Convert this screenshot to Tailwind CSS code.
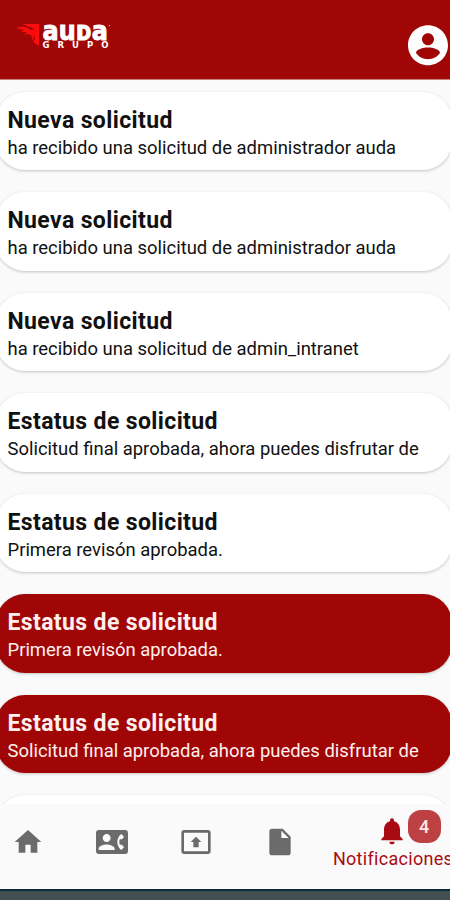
<!DOCTYPE html>
<html lang="es">
<head>
  <meta charset="UTF-8">
  <meta name="viewport" content="width=device-width, initial-scale=1.0">
  <title>Notificaciones</title>
  <script src="https://cdn.jsdelivr.net/npm/@tailwindcss/browser@4"></script>
</head>
<body class="bg-[#fafafa] font-[Roboto,sans-serif] h-[900px] overflow-hidden flex flex-col">
  <!-- Encabezado -->
  <header class="h-20 shrink-0 bg-[#a00606] border-b border-[#c98080] flex items-start justify-between overflow-hidden">
    <svg class="w-24 h-7 ml-4 mt-[22px] overflow-visible" viewBox="0 0 96 28">
      <g fill="#fb0d0d">
        <path d="M6 2H23V24L17 20L19 17L18 12L14 9L18 7L14 5Z"></path>
        <path d="M0 6C7 3 15 6 18 12L17 19L15 13L11 12L8 13L11 10L5 10L8 8Z"></path>
      </g>
      <g fill="white" stroke="white" font-family="DejaVu Sans" font-weight="bold">
        <text x="26.500" y="17.800" font-size="26" stroke-width="0.9" textLength="65.500" lengthAdjust="spacingAndGlyphs">auᴅa</text>
        <text x="26.500" y="26.300" font-size="8.500" stroke-width="0" textLength="66">GRUPO</text>
        <circle cx="93.500" cy="3.500" r="0.500" stroke="none"></circle>
      </g>
    </svg>
    <svg class="w-12 h-12 mt-[22px] -mr-0.5 shrink-0" viewBox="0 0 24 24" fill="white">
      <path d="M12 2C6.480 2 2 6.480 2 12s4.480 10 10 10 10-4.480 10-10S17.520 2 12 2zm0 4c1.660 0 3 1.340 3 3s-1.340 3-3 3-3-1.340-3-3 1.340-3 3-3z M12 13.200c-2.500 0-6 1-6 2.700 1.290 1.900 3.500 3.100 6 3.100s4.710-1.200 6-3.100c0-1.700-3.500-2.700-6-2.700z" fill-rule="evenodd" transform="translate(0 -0.4)"></path>
    </svg>
  </header>

  <!-- Lista de notificaciones -->
  <main id="lista" class="h-[724px] shrink-0 overflow-hidden pt-[11.500px] -ml-1 -mr-0.5 flex flex-col gap-[22px]"></main>

  <!-- Navegación inferior -->
  <nav class="h-[85px] shrink-0 flex items-start text-[#6b6b6b]">
    <a href="#" class="w-14 pt-[22px] flex justify-center">
      <svg class="w-8 h-8" viewBox="0 0 24 24" fill="currentColor"><path d="M10 20v-6h4v6h5v-8h3L12 3 2 12h3v8z"></path></svg>
    </a>
    <a href="#" class="w-28 pt-[22px] flex justify-center">
      <svg class="w-8 h-8" viewBox="0 0 24 24" fill="currentColor"><path d="M22 3H2C.9 3 0 3.9 0 5v14c0 1.100.9 2 2 2h20c1.100 0 1.990-.9 1.990-2L24 5c0-1.100-.9-2-2-2zM8 6c1.660 0 3 1.340 3 3s-1.340 3-3 3-3-1.340-3-3 1.340-3 3-3zm6 12H2v-1c0-2 4-3.100 6-3.100s6 1.100 6 3.100v1zm3.850-4h1.640L21 16l-1.990 1.990c-1.310-.98-2.280-2.380-2.730-3.990-.18-.64-.28-1.310-.28-2s.1-1.360.28-2c.45-1.620 1.420-3.010 2.730-3.990L21 8l-1.510 2h-1.640c-.22.63-.35 1.300-.35 2s.13 1.370.35 2z"></path></svg>
    </a>
    <a href="#" class="w-14 pt-[22px] flex justify-center">
      <svg class="w-8 h-8" viewBox="0 0 24 24" fill="currentColor"><path d="M21 3H3c-1.110 0-2 .89-2 2v14c0 1.100.89 2 2 2h18c1.110 0 2-.9 2-2V5c0-1.110-.89-2-2-2zm0 16.020H3V4.980h18v14.040zM10 12H8l4-4 4 4h-2v4h-4v-4z"></path></svg>
    </a>
    <a href="#" class="w-28 pt-[22px] flex justify-center">
      <svg class="w-8 h-8" viewBox="0 0 24 24" fill="currentColor"><path d="M6 2c-1.100 0-1.990.9-1.990 2L4 20c0 1.100.89 2 1.990 2H18c1.100 0 2-.9 2-2V8l-6-6H6zm7 7V3.500L18.500 9H13z"></path></svg>
    </a>
    <a href="#" class="relative w-[114px] pt-[11px] flex flex-col items-center text-[#a80b12]">
      <svg class="w-8 h-8 -ml-0.5" viewBox="0 0 24 24" fill="currentColor"><path d="M12 22c1.100 0 2-.9 2-2h-4c0 1.100.89 2 2 2zm6-6v-5c0-3.070-1.640-5.640-4.500-6.320V4c0-.83-.67-1.500-1.500-1.500s-1.500.67-1.500 1.500v.68C7.630 5.360 6 7.920 6 11v5l-2 2v1h16v-1l-2-2z"></path></svg>
      <span class="absolute left-[71.500px] top-1.5 w-[33px] h-[33px] rounded-[13px] bg-[#bd4043] text-[#fbe9e9] text-lg font-medium flex items-center justify-center">4</span>
      <span class="text-[18px] leading-6 tracking-[0.3px] whitespace-nowrap">Notificaciones</span>
    </a>
  </nav>
  <div class="h-[11px] shrink-0 bg-[#435053] border-t-2 border-[#0b2b38]"></div>

  <script>
    const notificaciones = [
      { titulo: "Nueva solicitud", texto: "ha recibido una solicitud de administrador auda", nueva: false },
      { titulo: "Nueva solicitud", texto: "ha recibido una solicitud de administrador auda", nueva: false },
      { titulo: "Nueva solicitud", texto: "ha recibido una solicitud de admin_intranet", nueva: false },
      { titulo: "Estatus de solicitud", texto: "Solicitud final aprobada, ahora puedes disfrutar de", nueva: false },
      { titulo: "Estatus de solicitud", texto: "Primera revisón aprobada.", nueva: false },
      { titulo: "Estatus de solicitud", texto: "Primera revisón aprobada.", nueva: true },
      { titulo: "Estatus de solicitud", texto: "Solicitud final aprobada, ahora puedes disfrutar de", nueva: true },
      { titulo: "", texto: "", nueva: false }
    ];

    // Las no leídas van en rojo
    const lista = document.getElementById('lista');
    notificaciones.forEach(n => {
      const card = document.createElement('div');
      card.className = 'h-[78.500px] shrink-0 rounded-[29px] pl-[11.500px] pt-[15px] whitespace-nowrap shadow-[0_1px_3px_rgba(0,0,0,0.22)] '
        + (n.nueva ? 'bg-[#a00606] text-[#fff0ee]' : 'bg-white text-[#111]');
      card.innerHTML = `
        <h2 class="text-[23px] leading-7 font-bold tracking-[0.38px]">${n.titulo}</h2>
        <p class="text-[18.450px] leading-[26px]">${n.texto}</p>
      `;
      lista.appendChild(card);
    });
  </script>
</body>
</html>
